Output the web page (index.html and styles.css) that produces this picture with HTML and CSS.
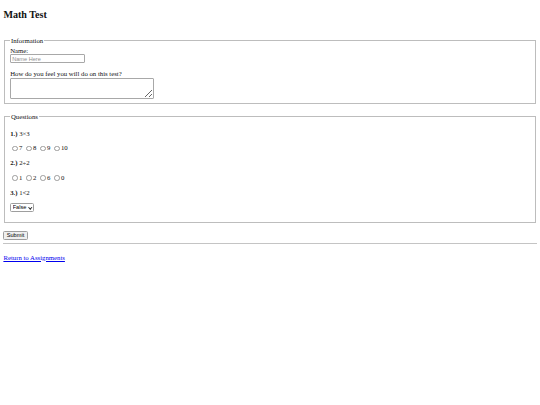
FILE: index.html
```html
<!DOCTYPE html>
<html lang="en">
<head>
<meta charset="utf-8">
<title>Math Test</title>
<link rel="stylesheet" href="styles.css">
</head>
<body>
<h2 class="title">Math Test</h2>
<form class="test" action="#">
  <fieldset class="group">
    <legend class="group-legend">Information</legend>
    <div class="line"><label for="student-name">Name:</label></div>
    <input class="text-input" id="student-name" type="text" placeholder="Name Here">
    <div class="line line-gap"><label for="feeling">How do you feel you will do on this test?</label></div>
    <textarea class="feel-box" id="feeling"></textarea>
  </fieldset>

  <fieldset class="group group-gap">
    <legend class="group-legend">Questions</legend>
    <p class="q"><b>1.)</b> 3×3</p>
    <p class="q">
      <input class="radio" type="radio" name="q1" id="q1a"><label for="q1a">7</label>
      <input class="radio" type="radio" name="q1" id="q1b"><label for="q1b">8</label>
      <input class="radio" type="radio" name="q1" id="q1c"><label for="q1c">9</label>
      <input class="radio" type="radio" name="q1" id="q1d"><label for="q1d">10</label>
    </p>
    <p class="q"><b>2.)</b> 2÷2</p>
    <p class="q">
      <input class="radio" type="radio" name="q2" id="q2a"><label for="q2a">1</label>
      <input class="radio" type="radio" name="q2" id="q2b"><label for="q2b">2</label>
      <input class="radio" type="radio" name="q2" id="q2c"><label for="q2c">6</label>
      <input class="radio" type="radio" name="q2" id="q2d"><label for="q2d">0</label>
    </p>
    <p class="q"><b>3.)</b> 1&lt;2</p>
    <p class="q q-select">
      <span class="select-wrap">
        <select class="choice" name="q3">
          <option>True</option>
          <option selected>False</option>
        </select>
      </span>
    </p>
  </fieldset>

  <div class="actions"><button class="submit" type="submit">Submit</button></div>
</form>
<hr class="rule">
<p class="back"><a class="back-link" href="#">Return to Assignments</a></p>
</body>
</html>
```

FILE: styles.css
```css
html {
  background: #ffffff;
}

body {
  margin: 3.4px;
  font-family: "Liberation Serif", "Times New Roman", serif;
  font-size: 6.75px;
  line-height: 1.15;
  color: #111111;
}

.title {
  font-size: 10.1px;
  font-weight: bold;
  line-height: 1.15;
  margin: 5.4px 0 16.2px;
}

.test {
  margin: 0;
}

.group {
  margin: 0 0.8px;
  padding: 2.4px 5px 4.2px;
  border: 1px solid #bdbdbd;
  min-width: 0;
}

.group-gap {
  margin-top: 9px;
}

.group-legend {
  padding: 0 0.8px;
}

.line-gap {
  margin-top: 6.75px;
}

.text-input {
  display: block;
  box-sizing: border-box;
  width: 75px;
  height: 8.8px;
  margin: 0;
  padding: 0 1px;
  font-family: "Liberation Sans", Arial, sans-serif;
  font-size: 5.6px;
  border: 1px solid #a8a8a8;
  border-radius: 1px;
  outline: none;
}

.text-input::placeholder {
  color: #8f8f8f;
}

.feel-box {
  display: block;
  box-sizing: border-box;
  width: 144px;
  height: 21px;
  margin: 0;
  padding: 1px;
  font-family: "Liberation Mono", "Courier New", monospace;
  font-size: 5.6px;
  border: 1px solid #a8a8a8;
  border-radius: 1px;
  resize: both;
}

.q {
  margin: 6.75px 0;
}

.q-select {
  height: 7.8px;
}

.radio {
  appearance: none;
  -webkit-appearance: none;
  box-sizing: border-box;
  display: inline-block;
  width: 5.5px;
  height: 5.5px;
  margin: 1.3px 1.3px 0 2.1px;
  border: 1px solid #9c9c9c;
  border-radius: 50%;
  background: #ffffff;
  vertical-align: -0.4px;
}

.radio:checked {
  border-color: #0075ff;
  background: radial-gradient(circle, #0075ff 45%, #ffffff 50%);
}

.select-wrap {
  position: relative;
  display: inline-block;
  vertical-align: top;
}

.select-wrap::after {
  content: "";
  position: absolute;
  right: 2.4px;
  top: 2.5px;
  width: 1.5px;
  height: 1.5px;
  border-right: 1px solid #222;
  border-bottom: 1px solid #222;
  transform: rotate(45deg);
  pointer-events: none;
}

.choice {
  appearance: none;
  -webkit-appearance: none;
  box-sizing: border-box;
  display: block;
  height: 8.6px;
  margin: 0;
  padding: 0 6.2px 0 1.5px;
  font-family: "Liberation Sans", Arial, sans-serif;
  font-size: 5.6px;
  line-height: 1;
  color: #000;
  background: #ffffff;
  border: 1px solid #9e9e9e;
  border-radius: 1.5px;
}

.actions {
  margin-top: 7.8px;
}

.submit {
  box-sizing: border-box;
  height: 8.4px;
  margin: 0;
  padding: 0 2.4px;
  font-family: "Liberation Sans", Arial, sans-serif;
  font-size: 5.6px;
  line-height: 1;
  color: #000;
  background: #efefef;
  border: 1px solid #9e9e9e;
  border-radius: 1.5px;
}

.rule {
  margin: 3.4px 0;
  height: 0;
  border: 0;
  border-top: 1px solid #c4c4c4;
}

.back {
  margin: 9.6px 0 6.75px;
}

.back-link {
  color: #0000ee;
}
```
